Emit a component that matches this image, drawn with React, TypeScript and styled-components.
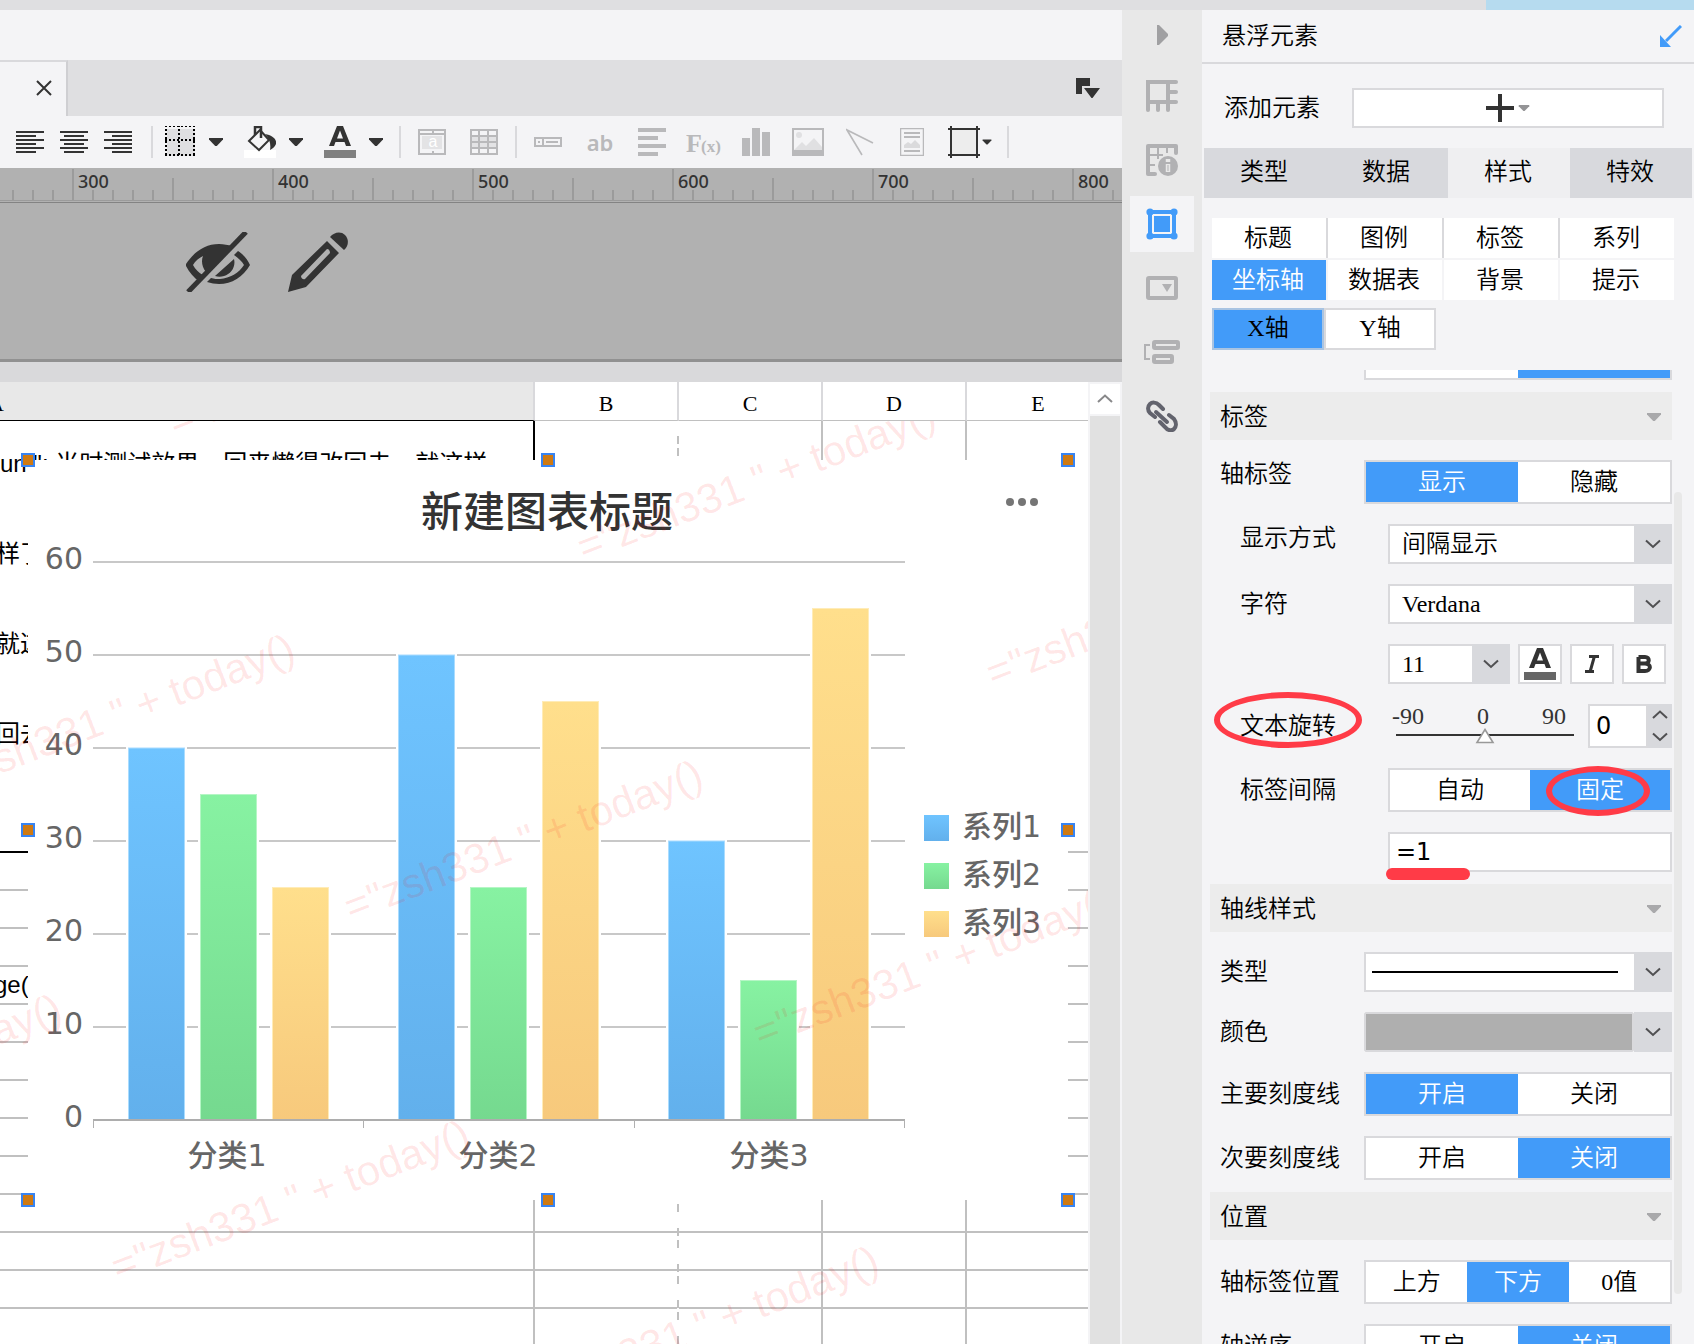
import React, { useState } from "react";
import styled, { createGlobalStyle, css } from "styled-components";

const blue = "#429bf9";
const ink = "#333333";
const mute = "#b9b9bb";
const line = "#d9d9dc";
const surface = "#f4f4f6";
const red = "#ff3b47";
const uiFont = `"Liberation Serif", "Noto Sans CJK SC", serif`;

const Global = createGlobalStyle`
  * { box-sizing: border-box; }
  body { margin: 0; background: ${surface}; }
  button, input, select { font: inherit; color: inherit; margin: 0; padding: 0; border: 0; border-radius: 0; background: none; }
  svg { display: block; flex: none; }
`;

/* ---------- shell ---------- */
const Shell = styled.div`
  display: flex;
  flex-direction: column;
  height: 100vh;
  overflow: hidden;
  font-family: ${uiFont};
  font-size: 24px;
  font-weight: 350;
  line-height: 28px;
  color: #000;
`;
const TopStrip = styled.div`
  flex: none;
  height: 10px;
  display: flex;
  justify-content: flex-end;
  background: #dfdfe1;
`;
const TopAccent = styled.div`
  width: 208px;
  background: #b6dbef;
`;
const Body = styled.div`
  flex: 1;
  min-height: 0;
  display: flex;
`;
const Editor = styled.main`
  flex: 1;
  min-width: 0;
  display: flex;
  flex-direction: column;
  background: ${surface};
`;
const MenuBar = styled.div`
  flex: none;
  height: 50px;
`;
const FileTabs = styled.div`
  flex: none;
  height: 56px;
  display: flex;
  justify-content: space-between;
  background: #dfdfe1;
`;
const FileTab = styled.div`
  width: 68px;
  padding-right: 14px;
  padding-bottom: 2px;
  display: flex;
  align-items: center;
  justify-content: flex-end;
  background: ${surface};
  border-top: 2px solid ${line};
  border-right: 2px solid #cfcfd2;
`;
const PlainButton = styled.button`
  display: flex;
  align-items: center;
  justify-content: center;
`;
const TabsMenu = styled(PlainButton)`
  margin-right: 22px;
`;

/* ---------- toolbar ---------- */
const Toolbar = styled.div`
  flex: none;
  height: 52px;
  padding-left: 14px;
  display: flex;
  align-items: center;
`;
const ToolGroup = styled.div<{ $gap: number }>`
  display: flex;
  align-items: center;
  gap: ${(p) => p.$gap}px;
`;
const ToolButton = styled(PlainButton)`
  width: 32px;
  height: 32px;
`;
const DropTool = styled(PlainButton)<{ $gap: number }>`
  height: 32px;
  gap: ${(p) => p.$gap}px;
`;
const Separator = styled.span<{ $before?: number; $after?: number }>`
  width: 2px;
  height: 32px;
  margin-left: ${(p) => p.$before ?? 15}px;
  margin-right: ${(p) => p.$after ?? 15}px;
  background: ${line};
`;

/* ---------- ruler and banner ---------- */
const Ruler = styled.div`
  flex: none;
  height: 36px;
  overflow: hidden;
  background: #b1b1b1;
`;
const Banner = styled.div`
  flex: none;
  height: 158px;
  padding: 28px 0 0 186px;
  display: flex;
  align-items: flex-start;
  gap: 38px;
  background: #b1b1b1;
  border-bottom: 3px solid #919191;
`;
const Gutter = styled.div`
  flex: none;
  height: 20px;
  background: #d9d9db;
`;

/* ---------- sheet ---------- */
const SheetRow = styled.div`
  flex: 1;
  min-height: 0;
  display: flex;
`;
const SheetView = styled.div`
  flex: 1;
  min-width: 0;
  position: relative;
  overflow: hidden;
  background: #fff;
`;
const Sheet = styled.table`
  width: 1111px;
  table-layout: fixed;
  border-collapse: separate;
  border-spacing: 0;
`;
const Head = styled.th<{ $active?: boolean }>`
  height: 39px;
  padding: 6px 0 0;
  font-size: 22px;
  font-weight: 400;
  line-height: 28px;
  text-align: center;
  border-right: 2px solid ${line};
  border-bottom: 1px solid #c0c0c0;
  ${(p) =>
    p.$active &&
    css`
      text-align: left;
      text-indent: -12px;
      background: #e8e8e8;
      border-bottom-color: #000;
    `}
`;
const Cell = styled.td<{ $dark?: boolean; $tall?: boolean; $open?: boolean }>`
  height: ${(p) => (p.$tall ? 432 : 38)}px;
  padding: 0;
  vertical-align: ${(p) => (p.$tall ? "top" : "middle")};
  overflow: hidden;
  white-space: nowrap;
  font-family: "Liberation Sans", "Noto Sans CJK SC", sans-serif;
  font-weight: 400;
  border-right: 2px solid ${(p) => (p.$open ? "transparent" : p.$dark ? "#000" : "#c0c0c0")};
  border-bottom: 2px solid ${(p) => (p.$dark ? "#000" : "#c0c0c0")};
`;
const CellLine = styled.div<{ $cut?: number }>`
  height: 90px;
  line-height: 86px;
  text-indent: ${(p) => -(p.$cut ?? 0)}px;
`;
const CellText = styled.div<{ $cut?: number }>`
  text-indent: ${(p) => -(p.$cut ?? 0)}px;
`;
const PageBreak = styled.div`
  position: absolute;
  left: 677px;
  top: 54px;
  bottom: 0;
  width: 2px;
  background: repeating-linear-gradient(#c0c0c0 0 8px, #fff 8px 12px, #c0c0c0 12px 20px, #fff 20px 36px);
`;
const Floating = styled.div`
  position: absolute;
  left: 28px;
  top: 78px;
  width: 1040px;
  height: 740px;
  background: #fff;
`;
const Handle = styled.span<{ $col: number; $row: number }>`
  position: absolute;
  left: ${(p) => p.$col * 50}%;
  top: ${(p) => p.$row * 50}%;
  width: 14px;
  height: 14px;
  margin: -7px 0 0 -7px;
  background: #cf7a12;
  border: 2px solid #3784f2;
`;
const Watermark = styled.svg`
  position: absolute;
  left: 0;
  top: 39px;
  pointer-events: none;
`;
const SheetScroll = styled.div`
  width: 34px;
  display: flex;
  flex-direction: column;
  gap: 2px;
  padding: 2px 2px 0;
  background: ${surface};
`;
const ScrollUp = styled(PlainButton)`
  height: 30px;
  background: #fff;
`;
const ScrollTrack = styled.div`
  flex: 1;
  background: #e1e1e1;
`;

/* ---------- icon rail ---------- */
const Rail = styled.nav`
  flex: none;
  width: 80px;
  padding-bottom: 8px;
  display: flex;
  flex-direction: column;
  align-items: center;
  gap: 8px;
  background: #e8e8e8;
`;
const RailButton = styled(PlainButton)<{ $active?: boolean }>`
  width: 64px;
  height: 56px;
  background: ${(p) => (p.$active ? surface : "transparent")};
`;
const RailToggle = styled(PlainButton)`
  width: 64px;
  height: 50px;
`;

/* ---------- property panel ---------- */
const Panel = styled.aside`
  flex: none;
  width: 492px;
  display: flex;
  flex-direction: column;
  background: ${surface};
`;
const PanelTitle = styled.header`
  flex: none;
  height: 54px;
  padding: 0 12px 0 20px;
  display: flex;
  align-items: center;
  justify-content: space-between;
  border-bottom: 2px solid ${line};
`;
const Title = styled.h1`
  margin: 0;
  font: inherit;
`;
const AddRow = styled.div`
  flex: none;
  padding: 24px 30px 20px 22px;
  display: flex;
  align-items: center;
  gap: 32px;
`;
const AddButton = styled(PlainButton)`
  flex: 1;
  height: 40px;
  gap: 4px;
  background: #fff;
  border: 2px solid ${line};
`;
const TabRow = styled.div`
  flex: none;
  margin: 0 2px;
  display: grid;
  grid-template-columns: repeat(4, 1fr);
`;
const Tab = styled.button<{ $active?: boolean }>`
  height: 50px;
  padding: 0 2px 2px 0;
  background: ${(p) => (p.$active ? "#efeff1" : "#d8d9dd")};
`;
const TopicGrid = styled.div`
  flex: none;
  margin: 20px 20px 0 10px;
  display: grid;
  grid-template-columns: repeat(4, 1fr);
  gap: 2px;
`;
const Topic = styled.button<{ $active?: boolean; $ruled?: boolean }>`
  height: 40px;
  padding-right: 2px;
  color: ${(p) => (p.$active ? "#fff" : "#000")};
  background: ${(p) => (p.$active ? blue : "#fff")};
  box-shadow: ${(p) => (p.$ruled ? `2px 0 0 ${line}` : "none")};
`;
const AxisRow = styled.div`
  flex: none;
  margin: 8px 10px 20px;
  display: flex;
`;
const AxisButton = styled.button<{ $active?: boolean }>`
  width: 112px;
  height: 42px;
  padding-bottom: 2px;
  background: ${(p) => (p.$active ? blue : "#fff")};
  border: 2px solid ${(p) => (p.$active ? "#a9c4e2" : line)};
`;
const ScrollArea = styled.div`
  flex: 1;
  min-height: 0;
  position: relative;
  overflow: hidden;
  padding: 0 22px 0 8px;
`;
const Fields = styled.div`
  display: flex;
  flex-direction: column;
  margin-top: -34px;
`;
const ScrollThumb = styled.div`
  position: absolute;
  top: 122px;
  right: 12px;
  bottom: 50px;
  width: 8px;
  border-radius: 4px;
  background: #e8e8e8;
`;
const SectionHead = styled.button`
  flex: none;
  height: 48px;
  margin-top: 12px;
  padding: 2px 10px 0;
  display: flex;
  align-items: center;
  justify-content: space-between;
  background: #ececec;
`;
const Row = styled.div<{ $sub?: boolean; $first?: boolean }>`
  flex: none;
  margin-top: ${(p) => (p.$first ? 0 : 20)}px;
  display: grid;
  grid-template-columns: ${(p) => (p.$sub ? "148px 1fr" : "144px 1fr")};
  padding-left: ${(p) => (p.$sub ? 30 : 10)}px;
  align-items: center;
`;
const Label = styled.label<{ $top?: boolean }>`
  position: relative;
  white-space: nowrap;
  align-self: ${(p) => (p.$top ? "start" : "center")};
`;
const Segments = styled.div`
  height: 44px;
  display: grid;
  grid-auto-flow: column;
  grid-auto-columns: 1fr;
  background: #fff;
  border: 2px solid ${line};
`;
const Segment = styled.button<{ $active?: boolean }>`
  position: relative;
  color: ${(p) => (p.$active ? "#fff" : "#000")};
  background: ${(p) => (p.$active ? blue : "#fff")};
`;
const SelectBox = styled.div`
  position: relative;
  display: grid;
`;
const Select = styled.select`
  appearance: none;
  width: 100%;
  height: 40px;
  padding: 0 40px 0 12px;
  background: #fff;
  border: 2px solid ${line};
`;
const Arrow = styled.span`
  position: absolute;
  top: 0;
  right: 0;
  bottom: 0;
  width: 38px;
  display: flex;
  align-items: center;
  justify-content: center;
  background: #d8d9dd;
  pointer-events: none;
`;
const Picker = styled.button`
  height: 40px;
  display: grid;
  grid-template-columns: 1fr 38px;
  align-items: stretch;
  background: #fff;
`;
const PickerValue = styled.span`
  display: flex;
  align-items: center;
  padding: 0 16px 0 6px;
  border: 2px solid ${line};
  border-right: 0;
`;
const LineSample = styled.span`
  flex: 1;
  height: 2px;
  background: #000;
`;
const ColorSample = styled.span`
  background: #afafaf;
  border: 2px solid ${line};
  border-radius: 2px;
`;
const PickerArrow = styled.span`
  display: flex;
  align-items: center;
  justify-content: center;
  background: #d8d9dd;
`;
const FontRow = styled.div`
  display: grid;
  grid-template-columns: 122px 44px 44px 44px;
  gap: 8px;
`;
const StyleButton = styled(PlainButton)`
  height: 40px;
  background: #fff;
  border: 2px solid ${line};
`;
const RotateRow = styled.div`
  height: 44px;
  display: grid;
  grid-template-columns: 1fr 60px 24px;
`;
const SliderBox = styled.div`
  padding: 0 14px 0 8px;
`;
const Scale = styled.div`
  height: 24px;
  display: flex;
  justify-content: space-between;
  padding-right: 8px;
  margin-left: -4px;
  line-height: 24px;
  color: #333;
`;
const thumb = encodeURIComponent(
  `<svg xmlns="http://www.w3.org/2000/svg" width="20" height="16"><path d="M10 1.5 18 14.500H2Z" fill="#fff" stroke="#999" stroke-width="1.600"/></svg>`
);
const Slider = styled.input`
  appearance: none;
  display: block;
  width: 100%;
  height: 16px;
  &::-webkit-slider-runnable-track {
    height: 16px;
    background: linear-gradient(#333, #333) 0 6px / 100% 2px no-repeat;
  }
  &::-webkit-slider-thumb {
    appearance: none;
    width: 20px;
    height: 16px;
    background: url("data:image/svg+xml,${thumb}") no-repeat;
  }
`;
const TextBox = styled.input`
  width: 100%;
  min-width: 0;
  height: 40px;
  padding: 0 6px;
  font-family: "DejaVu Sans", sans-serif;
  font-weight: 400;
  background: #fff;
  border: 2px solid ${line};
`;
const NumberBox = styled(TextBox)`
  height: 44px;
`;
const Spinner = styled.div`
  display: grid;
  grid-template-rows: 1fr 1fr;
  background: #d8d9dd;
`;
const InputWrap = styled.div`
  position: relative;
  display: grid;
`;
/* hand-drawn marks lying over the form */
const LabelRing = styled.span`
  position: absolute;
  left: -26px;
  top: -20px;
  width: 148px;
  height: 56px;
  border: 6px solid ${red};
  border-radius: 50%;
  pointer-events: none;
`;
const SegmentRing = styled.span`
  position: absolute;
  left: 16px;
  top: -4px;
  width: 104px;
  height: 50px;
  border: 6px solid ${red};
  border-radius: 50%;
  pointer-events: none;
`;
const Underline = styled.span`
  position: absolute;
  left: -2px;
  top: 36px;
  width: 84px;
  height: 12px;
  border-radius: 6px;
  background: ${red};
  pointer-events: none;
`;

/* ---------- icons ---------- */
const Caret = ({ w = 16, h = 8, c = ink }: { w?: number; h?: number; c?: string }) => (
  <svg width={w} height={h} viewBox="0 0 16 8"><path d="M1 0H15V1.500L8.800 8H7.200L1 1.500Z" fill={c} /></svg>
);
const Chevron = ({ up, c = "#505052" }: { up?: boolean; c?: string }) => (
  <svg width="16" height="10" viewBox="0 0 16 10">
    <path d={up ? "M1 8 8 1.500 15 8" : "M1 1.500 8 8 15 1.500"} fill="none" stroke={c} strokeWidth="2" />
  </svg>
);
const AlignIcon = ({ mode }: { mode: "left" | "center" | "right" }) => (
  <svg width="28" height="22" fill={ink}>
    {[0, 1, 2, 3, 4, 5].map((i) => {
      const w = i % 2 ? 20 : 28;
      const x = mode === "left" ? 0 : mode === "center" ? (28 - w) / 2 : 28 - w;
      return <rect key={i} x={x} y={i * 4} width={w} height="2" />;
    })}
  </svg>
);
const BorderIcon = () => (
  <svg width="32" height="32" viewBox="0 2 32 32">
    <rect x="3" y="5" width="28" height="27" fill="#dfdfe1" />
    <path d="M1 2H31M1 16H31M1 31H31M2 1V32M15 1V32M30 1V32" stroke="#000" strokeWidth="2" strokeDasharray="2 2" fill="none" />
  </svg>
);
const BucketIcon = () => (
  <svg width="32" height="32">
    <rect x="0" y="24" width="32" height="8" fill="#fff" />
    <path d="M5 15 16 4 25 14 15 24Z" fill="none" stroke={ink} strokeWidth="2" />
    <path d="M11 9V1H17V12" fill="none" stroke={ink} strokeWidth="2.500" />
    <path d="M21 8C28 9 33 13 32 18 31 21 28 23 26 24 27 19 26 13 21 8Z" fill={ink} />
  </svg>
);
const LetterA = ({ bar = "#808080", h = 32 }: { bar?: string; h?: number }) => (
  <svg width="32" height={h} viewBox="0 0 32 32">
    <path d="M13 0H19L27 20H22L20.500 16H11.500L10 20H5ZM16 4.500 13 12.500H19Z" fill={ink} fillRule="evenodd" />
    <rect y="24" width="32" height="8" fill={bar} />
  </svg>
);
const CellAIcon = () => (
  <svg width="28" height="26">
    <rect x="1" y="1" width="26" height="24" fill="none" stroke={mute} strokeWidth="2" />
    <path d="M0 5H28" stroke={mute} strokeWidth="2" />
    <path d="M15 1V4M15 22V25" stroke={mute} strokeWidth="2" />
    <rect x="4" y="7" width="20" height="13" fill="#e3e3e5" />
    <text x="15" y="18" textAnchor="middle" fontSize="16" fontFamily="Liberation Sans, sans-serif" fill="#fff">a</text>
  </svg>
);
const TableIcon = () => (
  <svg width="28" height="26">
    <rect x="2" y="8" width="24" height="12" fill="#e3e3e5" />
    <path d="M0 1H28M0 7H28M0 13H28M0 19H28M0 25H28M1 0V26M9 0V26M18 0V26M27 0V26" stroke={mute} strokeWidth="2" />
  </svg>
);
const FieldIcon = () => (
  <svg width="28" height="10">
    <path d="M1 1H27V9H1ZM9 1V9" fill="none" stroke={mute} strokeWidth="2" />
    <path d="M4 5H6M12 5H24" stroke={mute} strokeWidth="2" />
  </svg>
);
const AbIcon = () => (
  <svg width="28" height="28">
    <text x="14" y="23" textAnchor="middle" fontSize="22" fontWeight="600" fontFamily="Noto Sans, sans-serif" fill={mute}>ab</text>
  </svg>
);
const ParagraphIcon = () => (
  <svg width="28" height="28" fill={mute}>
    <rect width="28" height="4" /><rect y="8" width="20" height="4" /><rect y="16" width="28" height="4" /><rect y="24" width="20" height="4" />
  </svg>
);
const FxIcon = () => (
  <svg width="36" height="28">
    <text x="0" y="24" fontSize="26" fontWeight="700" fontFamily="Liberation Serif, serif" fill={mute}>F</text>
    <text x="15" y="24" fontSize="17" fontWeight="700" fontFamily="Liberation Serif, serif" fill={mute}>(x)</text>
  </svg>
);
const BarsIcon = () => (
  <svg width="28" height="28" fill={mute}>
    <rect y="10" width="8" height="18" /><rect x="10" width="8" height="28" /><rect x="20" y="4" width="8" height="24" />
  </svg>
);
const PictureIcon = () => (
  <svg width="32" height="28">
    <path d="M2 22 10 14 14 18 22 10 30 19V23H2Z" fill="#e0e0e2" />
    <circle cx="7" cy="7" r="3" fill="#e0e0e2" />
    <rect x="1" y="1" width="30" height="26" fill="none" stroke={mute} strokeWidth="2" />
    <rect y="22" width="32" height="6" fill={mute} />
  </svg>
);
const SlashIcon = () => (
  <svg width="28" height="28"><path d="M16 27 1 2 27 15" fill="none" stroke={mute} strokeWidth="1.600" /></svg>
);
const DocIcon = () => (
  <svg width="24" height="28">
    <rect x="0.500" y="0.500" width="23" height="27" fill="none" stroke={mute} strokeWidth="1.500" />
    <path d="M4 5H20M4 9H20M4 23H20" stroke={mute} strokeWidth="1.800" />
    <path d="M4 20V17L8 14 11 16 15 12 20 17V20Z" fill="#dadadc" />
  </svg>
);
const FrameIcon = () => (
  <svg width="32" height="32">
    <rect x="3" y="3" width="26" height="26" fill="#ededed" />
    <path d="M0 3H32M0 29H32M3 0V32M29 0V32" stroke={ink} strokeWidth="2" />
  </svg>
);
const EyeOffIcon = () => (
  <svg width="64" height="60" viewBox="0 0 64 60">
    <path d="M0 32C8 20 19 12 33 12C38 12 42 13 46 14L14 50C8 46 3 40 0 34ZM7 33C9 37 13 41 17 43L20 40C16 35 15 29 17 24C13 26 9 29 7 33Z" fill={ink} fillRule="evenodd" />
    <path d="M52 19C57 22 62 28 64 33C57 45 46 52 33 52C29 52 25 51 21 50L25 46C28 47 31 47 34 47C44 46 53 41 58 33C56 29 52 26 48 23ZM48 27C50 35 45 42 38 44C35 45 32 45 29 44Z" fill={ink} fillRule="evenodd" />
    <path d="M60 0 2 60" stroke={ink} strokeWidth="5" />
  </svg>
);
const PencilIcon = () => (
  <svg width="60" height="60" viewBox="0 0 60 60">
    <path d="M39 9 51 21 18 55 0 60 4 43ZM39 17 13 44C13 46 15 48 17 47L42 21C42 19 41 17 39 17Z" fill={ink} fillRule="evenodd" />
    <path d="M42 5C46 0 53-1 57 3C61 7 61 14 56 18Z" fill={ink} />
  </svg>
);
const rail = "#b1b1b3";
const RailIcons: React.ReactNode[] = [
  <svg width="32" height="32" key="cell" fill="none" stroke={rail} strokeWidth="4" strokeLinecap="round"><path d="M2 30V2H30M22 2V22M2 22H30M22 12H30M12 22V30M22 22V30" /></svg>,
  <svg width="32" height="32" key="info">
    <path d="M9 30H2V2H30V9" fill="none" stroke={rail} strokeWidth="4" strokeLinecap="round" strokeLinejoin="round" />
    <path d="M12 4V15M21 4V9M4 11H17M4 21H9" stroke={rail} strokeWidth="2" />
    <circle cx="22" cy="22" r="10" fill={rail} />
    <path d="M22 15V18M22 20V28" stroke="#e8e8e8" strokeWidth="4.500" />
    <path d="M22 21V27" stroke={rail} strokeWidth="1" />
  </svg>,
  <svg width="32" height="32" key="float">
    <path d="M4 4H28V28H4Z" fill="none" stroke={blue} strokeWidth="4" />
    <rect x="8" y="8" width="16" height="16" fill={blue} />
    {[4, 28].map((x) => [4, 28].map((y) => <circle key={`${x}${y}`} cx={x} cy={y} r="3.600" fill={blue} />))}
  </svg>,
  <svg width="32" height="24" key="widget">
    <rect x="2" y="2" width="28" height="20" rx="1" fill="none" stroke={rail} strokeWidth="4" />
    <path d="M16 8H26L21 16Z" fill={rail} />
  </svg>,
  <svg width="36" height="24" key="cond" fill="none" stroke={rail}>
    <path d="M6 5H1V19H6" strokeWidth="2" />
    <rect x="10" y="2" width="24" height="6" rx="1" strokeWidth="4" />
    <rect x="10" y="16" width="18" height="6" rx="1" strokeWidth="4" />
  </svg>,
  <svg width="32" height="32" key="link" fill="none" stroke="#62636d" strokeWidth="4" strokeLinecap="round">
    <path d="M17 9 13 5C10 2 6 2 4 4S1 10 4 13L9 17" />
    <path d="M10 12 21 22" />
    <path d="M14 22 19 27C22 31 26 31 28 29S31 23 28 19L23 15" />
  </svg>,
];
const railNames = ["单元格元素", "单元格属性", "悬浮元素", "控件设置", "条件属性", "超级链接"];

/* ---------- chart ---------- */
const series = [
  { name: "系列1", from: "#6fc4ff", to: "#62b0ec", edge: "#a9dcff", values: [40, 50, 30] },
  { name: "系列2", from: "#87f2a2", to: "#75d98f", edge: "#b5f6c5", values: [35, 25, 15] },
  { name: "系列3", from: "#ffdf8c", to: "#f7c97c", edge: "#ffecb8", values: [25, 45, 55] },
];
const baseY = 660;
const unit = 9.3;
const plotX = 65;
const catW = 270.3;
const chartFont = `"DejaVu Sans", "Noto Sans CJK SC", sans-serif`;

const Chart = () => (
  <svg width="1040" height="740" fontFamily={chartFont} fontWeight="500" role="img" aria-label="新建图表标题">
    <defs>
      {series.map((s, i) => (
        <linearGradient key={i} id={`fill${i}`} x1="0" y1="0" x2="0" y2="1">
          <stop offset="0" stopColor={s.from} />
          <stop offset="1" stopColor={s.to} />
        </linearGradient>
      ))}
    </defs>
    <text x="519" y="67" textAnchor="middle" fontSize="42" fill="#333">新建图表标题</text>
    {[0, 12, 24].map((x) => <circle key={x} cx={982 + x} cy="42" r="4" fill="#757575" />)}
    {[10, 20, 30, 40, 50, 60].map((v) => (
      <rect key={v} x={plotX} y={Math.round(baseY - v * unit) - 1} width="812" height="2" fill="#c8c8c8" />
    ))}
    {series.map((s, i) =>
      s.values.map((v, c) => {
        const x = 100.5 + c * 270 + i * 72;
        const h = v * unit;
        return (
          <g key={`${i}-${c}`}>
            <rect x={x - 2.5} y={baseY - h - 2} width="61" height={h + 2} fill="#fff" />
            <rect x={x} y={baseY - h} width="56" height={h} fill={`url(#fill${i})`} stroke={s.edge} />
          </g>
        );
      })
    )}
    <rect x={plotX} y={baseY - 1} width="812" height="2" fill="#adadad" />
    {[0, 1, 2, 3].map((c) => <rect key={c} x={Math.round(plotX + c * catW)} y={baseY} width="1" height="8" fill="#b0b0b0" />)}
    <g fontSize="30" fill="#666">
      {[0, 10, 20, 30, 40, 50, 60].map((v) => (
        <text key={v} x="55" y={Math.round(667 - v * unit)} textAnchor="end">{v}</text>
      ))}
      {[1, 2, 3].map((c) => (
        <text key={c} x={199 + (c - 1) * 271} y="706" textAnchor="middle">{`分类${c}`}</text>
      ))}
      {series.map((s, i) => (
        <g key={s.name}>
          <rect x="896" y={355 + i * 48} width="25" height="26" fill={`url(#fill${i})`} />
          <text x="934" y={377 + i * 48}>{s.name}</text>
        </g>
      ))}
    </g>
  </svg>
);

const marks = [
  [175, 16], [-57, 375], [-290, 735], [584, 141], [351, 501], [118, 861], [993, 267], [760, 627], [527, 987],
];

const RulerScale = () => (
  <svg width="100%" height="36">
    {Array.from({ length: 100 }, (_, i) => {
      const n = i - 3;
      const y = n % 10 === 0 ? 1 : n % 5 === 0 ? 10 : 22;
      return <rect key={i} x={12 + i * 20} y={y} width="2" height={32 - y} fill="#9b9b9b" />;
    })}
    <rect y="32" width="100%" height="1" fill="#9b9b9b" />
    <rect y="34" width="100%" height="1" fill="#838383" />
    {Array.from({ length: 6 }, (_, i) => (
      <text key={i} x={78 + i * 200} y="20" fontSize="18" fontFamily="Noto Sans, sans-serif" fontWeight="500" fill={ink}>
        {300 + i * 100}
      </text>
    ))}
  </svg>
);

const Choice = ({ options, value, name, ring }: { options: string[]; value: number; name: string; ring?: number }) => {
  const [on, setOn] = useState(value);
  return (
    <Segments role="group" aria-label={name}>
      {options.map((o, i) => (
        <Segment key={i} $active={on === i} aria-pressed={on === i} onClick={() => setOn(i)}>
          {o}
          {ring === i && <SegmentRing />}
        </Segment>
      ))}
    </Segments>
  );
};

const Section = ({ title }: { title: string }) => (
  <SectionHead>
    {title}
    <Caret c="#a9a9ab" />
  </SectionHead>
);

export default function App() {
  const [text, setText] = useState("=1");
  const [angle, setAngle] = useState("0");
  return (
    <Shell>
      <Global />
      <TopStrip><TopAccent /></TopStrip>
      <Body>
        <Editor>
          <MenuBar />
          <FileTabs>
            <FileTab>
              <PlainButton aria-label="关闭">
                <svg width="16" height="16"><path d="M1 1 15 15M15 1 1 15" stroke={ink} strokeWidth="2" /></svg>
              </PlainButton>
            </FileTab>
            <TabsMenu aria-label="文件列表">
              <svg width="24" height="20" fill={ink}><path d="M0 0H14V8H6V16H0ZM8 10H24L16.500 20H15.500Z" /></svg>
            </TabsMenu>
          </FileTabs>
          <Toolbar>
            <ToolGroup $gap={12}>
              <ToolButton aria-label="左对齐"><AlignIcon mode="left" /></ToolButton>
              <ToolButton aria-label="居中"><AlignIcon mode="center" /></ToolButton>
              <ToolButton aria-label="右对齐"><AlignIcon mode="right" /></ToolButton>
            </ToolGroup>
            <Separator $before={17} $after={11} />
            <ToolGroup $gap={20}>
              <DropTool $gap={12} aria-label="边框"><BorderIcon /><Caret /></DropTool>
              <DropTool $gap={12} aria-label="填充"><BucketIcon /><Caret /></DropTool>
              <DropTool $gap={12} aria-label="字体颜色"><LetterA /><Caret /></DropTool>
            </ToolGroup>
            <Separator />
            <ToolGroup $gap={20}>
              <ToolButton aria-label="合并"><CellAIcon /></ToolButton>
              <ToolButton aria-label="拆分"><TableIcon /></ToolButton>
            </ToolGroup>
            <Separator />
            <ToolGroup $gap={20}>
              <ToolButton aria-label="数据列"><FieldIcon /></ToolButton>
              <ToolButton aria-label="普通文本"><AbIcon /></ToolButton>
              <ToolButton aria-label="富文本"><ParagraphIcon /></ToolButton>
              <ToolButton aria-label="公式"><FxIcon /></ToolButton>
              <ToolButton aria-label="图表"><BarsIcon /></ToolButton>
              <ToolButton aria-label="图片"><PictureIcon /></ToolButton>
              <ToolButton aria-label="斜线"><SlashIcon /></ToolButton>
              <ToolButton aria-label="子报表"><DocIcon /></ToolButton>
              <DropTool $gap={2} aria-label="悬浮元素"><FrameIcon /><Caret w={10} h={6} /></DropTool>
            </ToolGroup>
            <Separator />
          </Toolbar>
          <Ruler><RulerScale /></Ruler>
          <Banner>
            <PlainButton aria-label="隐藏"><EyeOffIcon /></PlainButton>
            <PlainButton aria-label="编辑"><PencilIcon /></PlainButton>
          </Banner>
          <Gutter />
          <SheetRow>
            <SheetView>
              <Sheet>
                <colgroup>
                  <col style={{ width: 535 }} />
                  {[0, 1, 2, 3].map((i) => <col key={i} style={{ width: 144 }} />)}
                </colgroup>
                <thead>
                  <tr>
                    <Head $active>A</Head>
                    <Head>B</Head>
                    <Head>C</Head>
                    <Head>D</Head>
                    <Head>E</Head>
                  </tr>
                </thead>
                <tbody>
                  <tr>
                    <Cell $dark $tall>
                      <CellLine>unt": 当时测试效果，回来懒得改回去，就这样</CellLine>
                      <CellLine $cut={4}>样了</CellLine>
                      <CellLine $cut={4}>就这</CellLine>
                      <CellLine $cut={4}>回去</CellLine>
                    </Cell>
                    <Cell $tall $open />
                    <Cell $tall />
                    <Cell $tall />
                    <Cell $tall />
                  </tr>
                  {Array.from({ length: 14 }, (_, r) => (
                    <tr key={r}>
                      <Cell>{r === 3 && <CellText $cut={6}>ge(</CellText>}</Cell>
                      <Cell $open />
                      <Cell />
                      <Cell />
                      <Cell />
                    </tr>
                  ))}
                </tbody>
              </Sheet>
              <PageBreak />
              <Floating>
                <Chart />
                {[0, 1, 2].map((r) => [0, 1, 2].filter((c) => r !== 1 || c !== 1).map((c) => <Handle key={`${r}${c}`} $col={c} $row={r} />))}
              </Floating>
              <Watermark width="100%" height="100%">
                {marks.map(([x, y], i) => (
                  <text key={i} transform={`translate(${x} ${y}) rotate(-21)`} fontSize="42" fontFamily="Liberation Sans, sans-serif" fontWeight="400" fill="#ff0000" fillOpacity="0.1">
                    {`="zsh331 " + today()`}
                  </text>
                ))}
              </Watermark>
            </SheetView>
            <SheetScroll>
              <ScrollUp aria-label="向上滚动"><Chevron up c="#88888a" /></ScrollUp>
              <ScrollTrack />
            </SheetScroll>
          </SheetRow>
        </Editor>
        <Rail>
          <RailToggle aria-label="收起">
            <svg width="12" height="20"><path d="M1 0H3L12 9V11L3 20H1Z" fill="#a0a0a2" /></svg>
          </RailToggle>
          {RailIcons.map((icon, i) => (
            <RailButton key={i} $active={i === 2} aria-label={railNames[i]}>{icon}</RailButton>
          ))}
        </Rail>
        <Panel>
          <PanelTitle>
            <Title>悬浮元素</Title>
            <PlainButton aria-label="弹出">
              <svg width="22" height="22"><path d="M21 1 6 16" stroke={blue} strokeWidth="3" /><path d="M0 10V22H11Z" fill={blue} /></svg>
            </PlainButton>
          </PanelTitle>
          <AddRow>
            添加元素
            <AddButton aria-label="添加元素">
              <svg width="28" height="28"><path d="M0 14H28M14 0V28" stroke={ink} strokeWidth="4" /></svg>
              <Caret w={12} c="#949496" />
            </AddButton>
          </AddRow>
          <TabRow>
            {["类型", "数据", "样式", "特效"].map((t, i) => <Tab key={t} $active={i === 2}>{t}</Tab>)}
          </TabRow>
          <TopicGrid>
            {["标题", "图例", "标签", "系列", "坐标轴", "数据表", "背景", "提示"].map((t, i) => (
              <Topic key={t} $active={i === 4} $ruled={i < 3}>{t}</Topic>
            ))}
          </TopicGrid>
          <AxisRow>
            <AxisButton $active>X轴</AxisButton>
            <AxisButton>Y轴</AxisButton>
          </AxisRow>
          <ScrollArea>
            <Fields>
              <Row $first>
                <span />
                <Choice name="轴标题" options={["", ""]} value={1} />
              </Row>
              <Section title="标签" />
              <Row>
                <Label as="span" $top>轴标签</Label>
                <Choice name="轴标签" options={["显示", "隐藏"]} value={0} />
              </Row>
              <Row $sub>
                <Label htmlFor="mode" $top>显示方式</Label>
                <SelectBox>
                  <Select id="mode"><option>间隔显示</option></Select>
                  <Arrow><Chevron /></Arrow>
                </SelectBox>
              </Row>
              <Row $sub>
                <Label htmlFor="font">字符</Label>
                <SelectBox>
                  <Select id="font"><option>Verdana</option></Select>
                  <Arrow><Chevron /></Arrow>
                </SelectBox>
              </Row>
              <Row $sub>
                <span />
                <FontRow>
                  <SelectBox>
                    <Select aria-label="字号"><option>11</option></Select>
                    <Arrow><Chevron /></Arrow>
                  </SelectBox>
                  <StyleButton aria-label="字体颜色"><LetterA bar="#666" /></StyleButton>
                  <StyleButton aria-label="斜体">
                    <svg width="14" height="18"><path d="M4 1.500H14M0 16.500H9M9.500 1 5 17" stroke={ink} strokeWidth="3" /></svg>
                  </StyleButton>
                  <StyleButton aria-label="加粗">
                    <svg width="16" height="18"><path d="M2.500 2H9C14 2 14 8.500 9 8.500H2.500M9 8.500C15.500 8.500 15.500 16 9 16H2.500V2" fill="none" stroke={ink} strokeWidth="4" /></svg>
                  </StyleButton>
                </FontRow>
              </Row>
              <Row $sub>
                <Label htmlFor="angle">文本旋转<LabelRing /></Label>
                <RotateRow>
                  <SliderBox>
                    <Scale><span>-90</span><span>0</span><span>90</span></Scale>
                    <Slider type="range" min="-90" max="90" value={Number(angle) || 0} onChange={(e) => setAngle(e.target.value)} aria-label="旋转角度" />
                  </SliderBox>
                  <NumberBox id="angle" value={angle} onChange={(e) => setAngle(e.target.value)} />
                  <Spinner>
                    <PlainButton aria-label="增加"><Chevron up /></PlainButton>
                    <PlainButton aria-label="减少"><Chevron /></PlainButton>
                  </Spinner>
                </RotateRow>
              </Row>
              <Row $sub>
                <Label as="span">标签间隔</Label>
                <Choice name="标签间隔" options={["自动", "固定"]} value={1} ring={1} />
              </Row>
              <Row $sub>
                <span />
                <InputWrap>
                  <TextBox aria-label="间隔值" value={text} onChange={(e) => setText(e.target.value)} />
                  <Underline />
                </InputWrap>
              </Row>
              <Section title="轴线样式" />
              <Row>
                <Label as="span">类型</Label>
                <Picker aria-label="类型">
                  <PickerValue><LineSample /></PickerValue>
                  <PickerArrow><Chevron /></PickerArrow>
                </Picker>
              </Row>
              <Row>
                <Label as="span">颜色</Label>
                <Picker aria-label="颜色">
                  <ColorSample />
                  <PickerArrow><Chevron /></PickerArrow>
                </Picker>
              </Row>
              <Row>
                <Label as="span">主要刻度线</Label>
                <Choice name="主要刻度线" options={["开启", "关闭"]} value={0} />
              </Row>
              <Row>
                <Label as="span">次要刻度线</Label>
                <Choice name="次要刻度线" options={["开启", "关闭"]} value={1} />
              </Row>
              <Section title="位置" />
              <Row>
                <Label as="span">轴标签位置</Label>
                <Choice name="轴标签位置" options={["上方", "下方", "0值"]} value={1} />
              </Row>
              <Row>
                <Label as="span">轴逆序</Label>
                <Choice name="轴逆序" options={["开启", "关闭"]} value={1} />
              </Row>
            </Fields>
            <ScrollThumb />
          </ScrollArea>
        </Panel>
      </Body>
    </Shell>
  );
}
